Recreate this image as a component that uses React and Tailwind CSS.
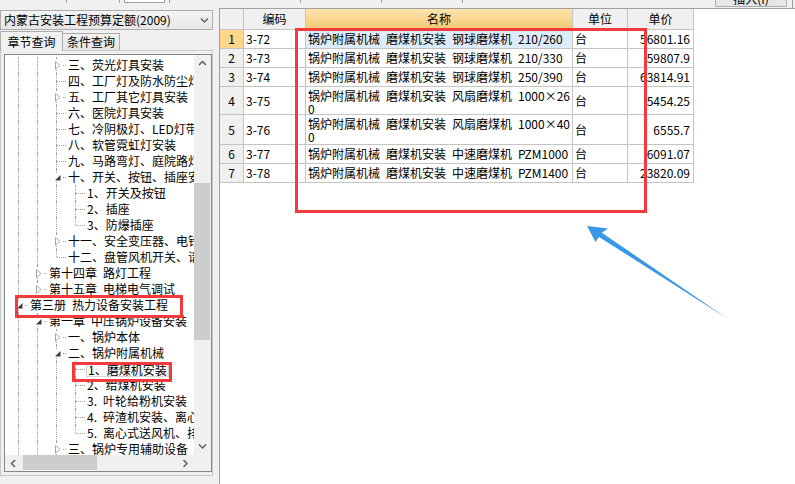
import React from "react";

const SP = "\u2002";

const tree = [
  { t: "三、荧光灯具安装", l: 2, ic: "c" },
  { t: "四、工厂灯及防水防尘灯具安装", l: 2 },
  { t: "五、工厂其它灯具安装", l: 2, ic: "c" },
  { t: "六、医院灯具安装", l: 2 },
  { t: "七、冷阴极灯、LED灯带安装", l: 2 },
  { t: "八、软管霓虹灯安装", l: 2 },
  { t: "九、马路弯灯、庭院路灯安装", l: 2 },
  { t: "十、开关、按钮、插座安装", l: 2, ic: "o" },
  { t: "1、开关及按钮", l: 3 },
  { t: "2、插座", l: 3 },
  { t: "3、防爆插座", l: 3, last: true },
  { t: "十一、安全变压器、电铃安装", l: 2, ic: "c" },
  { t: "十二、盘管风机开关、请勿打扰灯", l: 2, last: true },
  { t: `第十四章${SP}路灯工程`, l: 1, ic: "c" },
  { t: `第十五章${SP}电梯电气调试`, l: 1, ic: "c", last: true },
  { t: `第三册${SP}热力设备安装工程`, l: 0, ic: "o" },
  { t: `第一章${SP}中压锅炉设备安装`, l: 1, ic: "o" },
  { t: "一、锅炉本体", l: 2, ic: "c" },
  { t: "二、锅炉附属机械", l: 2, ic: "o" },
  { t: "1、磨煤机安装", l: 3, sel: true },
  { t: "2、给煤机安装", l: 3 },
  { t: `3.${SP}叶轮给粉机安装`, l: 3 },
  { t: `4.${SP}碎渣机安装、离心式风机安装`, l: 3 },
  { t: `5.${SP}离心式送风机、排粉机安装`, l: 3, last: true },
  { t: "三、锅炉专用辅助设备", l: 2, ic: "c" },
];

const pre = `锅炉附属机械${SP}磨煤机安装${SP}`;
const rows = [
  { n: 1, code: "3-72", name: [`${pre}钢球磨煤机${SP}210/260`], price: "56801.16", sel: true },
  { n: 2, code: "3-73", name: [`${pre}钢球磨煤机${SP}210/330`], price: "59807.9" },
  { n: 3, code: "3-74", name: [`${pre}钢球磨煤机${SP}250/390`], price: "63814.91" },
  { n: 4, code: "3-75", name: [`${pre}风扇磨煤机${SP}1000×26`, "0"], price: "5454.25" },
  { n: 5, code: "3-76", name: [`${pre}风扇磨煤机${SP}1000×40`, "0"], price: "6555.7" },
  { n: 6, code: "3-77", name: [`${pre}中速磨煤机${SP}PZM1000`], price: "6091.07" },
  { n: 7, code: "3-78", name: [`${pre}中速磨煤机${SP}PZM1400`], price: "23820.09" },
];

function Chev({ dir }) {
  const d = {
    up: "M1 5 L4.5 1.5 L8 5",
    down: "M1 1.5 L4.5 5 L8 1.5",
    left: "M5 1 L1.5 4.5 L5 8",
    right: "M1.5 1 L5 4.5 L1.5 8",
  }[dir];
  const flat = dir === "up" || dir === "down";
  return (
    <svg width={flat ? 9 : 7} height={flat ? 7 : 9} viewBox={flat ? "0 0 9 7" : "0 0 7 9"}>
      <path d={d} fill="none" stroke="#606060" strokeWidth="1.5" />
    </svg>
  );
}

function TopStrip() {
  const sep = "w-px h-[3px] bg-[#a0a0a0] shrink-0";
  return (
    <div className="flex h-[8px] items-start overflow-hidden">
      <div className="w-[66px] shrink-0" />
      <div className={sep} />
      <div className="w-[52px] shrink-0" />
      <div className={sep} />
      <div className="ml-[4px] w-[41px] h-[3px] shrink-0 bg-white border-x border-b border-[#a0a0a0]" />
      <div className="w-[4px] shrink-0" />
      <div className={sep} />
      <div className="w-[130px] shrink-0" />
      <div className={sep} />
      <div className="w-[80px] shrink-0" />
      <div className={sep} />
      <div className="w-[80px] shrink-0" />
      <div className={sep} />
      <div className="w-[252px] shrink-0" />
      <div className="w-[72px] h-[7px] shrink-0 overflow-hidden border-x border-b border-[#acacac] bg-[#e6e6e6] rounded-b-[2px]">
        <div className="-mt-[7px] text-center leading-[12px]">插入(I)</div>
      </div>
      <div className="w-[5px] shrink-0" />
      <div className="w-px h-[8px] bg-[#a0a0a0] shrink-0" />
    </div>
  );
}

function TreeRow({ row }) {
  const line = "border-l border-dotted border-[#a0a0a0]";
  const cells = [];
  for (let k = 0; k < row.l; k++) {
    cells.push(
      <div key={k} className="relative w-[19px] h-full shrink-0">
        <div className={`absolute left-[9px] top-0 bottom-0 ${line}`} />
      </div>
    );
  }
  return (
    <div className="flex h-[16px] items-center whitespace-nowrap">
      {cells}
      <div className="relative w-[19px] h-full shrink-0">
        <div className={`absolute left-[9px] top-0 h-[8px] ${line}`} />
        {!row.last && <div className={`absolute left-[9px] top-[8px] bottom-0 ${line}`} />}
        <div className="absolute left-[10px] top-[8px] w-[9px] border-t border-dotted border-[#a0a0a0]" />
        {row.ic === "c" && (
          <div className="absolute left-[6px] top-[3px] w-[9px] h-[10px] bg-white flex items-center justify-center">
            <svg width="6" height="9" viewBox="0 0 6 9">
              <path d="M0.5 0.5 L5 4.5 L0.5 8.5 Z" fill="none" stroke="#a6a6a6" strokeWidth="1" />
            </svg>
          </div>
        )}
        {row.ic === "o" && (
          <div className="absolute left-[6px] top-[4px] w-[9px] h-[9px] bg-white flex items-end justify-center pb-[1px]">
            <svg width="6" height="6" viewBox="0 0 6 6">
              <path d="M5.5 0 L5.5 5.5 L0 5.5 Z" fill="#3c3c3c" />
            </svg>
          </div>
        )}
      </div>
      {row.sel ? (
        <span className="ml-[1px] border border-[#d6d6d6] bg-[#f7f7f7] px-[1px] leading-[13px] text-[12px]">{row.t}</span>
      ) : (
        <span className="ml-[2px] leading-[16px] text-[12px]">{row.t}</span>
      )}
    </div>
  );
}

function LeftPanel() {
  return (
    <div className="w-[213px] shrink-0 flex flex-col">
      <div className="mt-[2px] h-[20px] flex items-center justify-between border border-[#acacac] bg-gradient-to-b from-[#f4f4f4] to-[#e6e6e6] pl-[3px] pr-[3px]">
        <span className="leading-[14px]">内蒙古安装工程预算定额(2009)</span>
        <Chev dir="down" />
      </div>
      <div className="h-[20px] flex items-end">
        <div className="relative z-10 -mb-px h-[20px] w-[63px] flex items-center justify-center border border-b-0 border-[#acacac] bg-[#f0f0f0]">
          章节查询
        </div>
        <div className="h-[17px] w-[57px] flex items-center justify-center border border-l-0 border-b-0 border-[#acacac] bg-gradient-to-b from-[#f2f2f2] to-[#e4e4e4]">
          条件查询
        </div>
      </div>
      <div className="h-[426px] border border-[#c9c9c9] bg-[#f0f0f0] pl-[3px] pr-px pt-[3px]">
        <div className="h-[418px] w-[208px] border border-[#828790] bg-white flex flex-col">
          <div className="h-[400px] flex">
            <div className="flex-1 overflow-hidden pt-[2px] pl-[4px] bg-white">
              {tree.map((r, i) => (
                <TreeRow key={i} row={r} />
              ))}
            </div>
            <div className="w-[17px] shrink-0 flex flex-col bg-[#f0f0f0]">
              <div className="h-[17px] flex items-center justify-center">
                <Chev dir="up" />
              </div>
              <div className="mt-[111px] h-[157px] w-[16px] bg-[#cdcdcd]" />
              <div className="flex-1" />
              <div className="h-[17px] flex items-center justify-center">
                <Chev dir="down" />
              </div>
            </div>
          </div>
          <div className="h-[16px] flex bg-[#f0f0f0]">
            <div className="w-[17px] flex items-center justify-center">
              <Chev dir="left" />
            </div>
            <div className="ml-px w-[74px] h-[15px] bg-[#cdcdcd]" />
            <div className="flex-1" />
            <div className="w-[17px] flex items-center justify-center">
              <Chev dir="right" />
            </div>
            <div className="w-[17px] bg-[#f0f0f0]" />
          </div>
        </div>
      </div>
    </div>
  );
}

function Grid() {
  const cell = "border-r border-b border-[#c4c4c4] overflow-hidden whitespace-nowrap";
  return (
    <div className="grid grid-cols-[24px_62px_267px_55px_66px] grid-rows-[21px_19px_19px_19px_28px_30px_19px_19px] w-[474px]">
      <div className={`${cell} bg-[#f0f0f0]`} />
      <div className={`${cell} bg-[#f0f0f0] flex items-center justify-center`}>编码</div>
      <div className={`${cell} bg-gradient-to-b from-[#fce4ad] to-[#f4ca74] flex items-center justify-center`}>名称</div>
      <div className={`${cell} bg-[#f0f0f0] flex items-center justify-center`}>单位</div>
      <div className={`${cell} bg-[#f0f0f0] flex items-center justify-center`}>单价</div>
      {rows.map((r) => (
        <React.Fragment key={r.n}>
          <div className={`${cell} ${r.sel ? "bg-[#ffd68a]" : "bg-[#f0f0f0]"} flex items-center justify-center`}>{r.n}</div>
          <div className={`${cell} flex items-center pl-[2px]`}>{r.code}</div>
          <div
            className={`${cell} ${r.sel ? "bg-[#dcecfc]" : "bg-white"} pl-[2px] flex flex-col ${
              r.name.length > 1 ? "justify-start pt-[2px] leading-[13px]" : "justify-center leading-[14px]"
            }`}
          >
            {r.name.map((s, i) => (
              <span key={i}>{s}</span>
            ))}
          </div>
          <div className={`${cell} flex items-center pl-[2px]`}>台</div>
          <div className={`${cell} flex items-center justify-end pr-[3px]`}>{r.price}</div>
        </React.Fragment>
      ))}
    </div>
  );
}

export default function App() {
  return (
    <div className="relative w-[795px] h-[484px] overflow-hidden bg-[#f0f0f0] text-[12px] text-black font-['Noto_Sans_CJK_SC',sans-serif]">
      <TopStrip />
      <div className="flex h-[476px]">
        <LeftPanel />
        <div className="ml-[6px] flex-1 border-l border-t border-[#a0a0a0] bg-white">
          <Grid />
        </div>
      </div>

      <div className="absolute left-[295px] top-[28px] w-[352px] h-[185px] border-[3px] border-[#f23a3a]" />
      <div className="absolute left-[15px] top-[295px] w-[168px] h-[23px] border-[3px] border-[#f23a3a]" />
      <div className="absolute left-[72px] top-[362px] w-[100px] h-[20px] border-[3px] border-[#f23a3a]" />

      <svg className="absolute left-[580px] top-[220px]" width="160" height="110" viewBox="0 0 160 110">
        <polygon points="7,6 28,8.5 21.8,12.7 148,99 19,16.9 15.5,22" fill="#3a96e6" />
      </svg>
    </div>
  );
}
